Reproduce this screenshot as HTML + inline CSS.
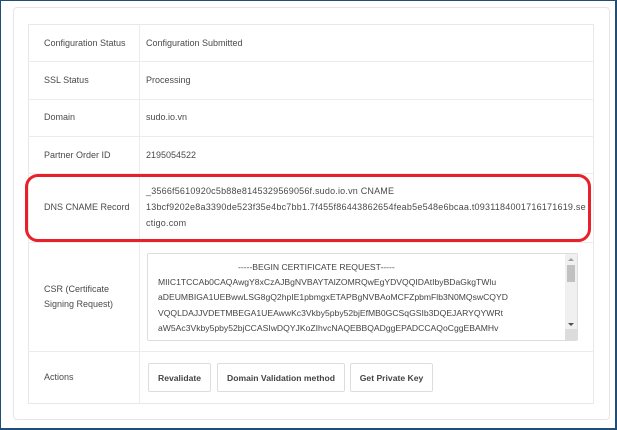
<!DOCTYPE html>
<html><head><style>
*{margin:0;padding:0;box-sizing:border-box}
body{width:617px;height:430px;background:#fff;position:relative;overflow:hidden;font-family:"Liberation Sans",sans-serif;color:#333;font-size:9px}
.frame{position:absolute;left:0;top:0;width:617px;height:430px;border:1px solid #1f4e79;border-bottom-width:2px;border-right-width:2px}
.card{position:absolute;left:13px;top:7px;width:597px;height:413px;border:1px solid #e6e6e6;border-radius:4px;background:#fff}
.tbl{position:absolute;left:28px;top:24px;width:566px;height:380px;border:1px solid #e8e8e8}
.h{position:absolute;left:28px;width:566px;height:1px;background:#ececec}
.v{position:absolute;left:139px;top:24px;width:1px;height:380px;background:#ececec}
.t{position:absolute;white-space:nowrap;color:#4a4a4a}
.ta{position:absolute;left:147px;top:253px;width:431px;height:88px;border:1px solid #ddd;border-radius:2px;overflow:hidden;background:#fff}
.ta .line{position:absolute;white-space:nowrap;font-size:8.6px;color:#444}
.sb{position:absolute;right:0;top:0;width:12px;height:100%;background:#f0f0f0}
.btn{position:absolute;top:363px;height:29px;border:1px solid #ddd;border-radius:2px;background:#fff;font-weight:bold;font-size:8.6px;color:#444;display:flex;align-items:center;justify-content:center}
.red{position:absolute;left:25px;top:174px;width:566px;height:68px;border:3px solid #e8202a;border-radius:13px}
</style></head><body>
<div class="frame"></div>
<div class="card"></div>
<div class="tbl"></div>
<div class="h" style="top:61px"></div>
<div class="h" style="top:99px"></div>
<div class="h" style="top:136px"></div>
<div class="h" style="top:173px"></div>
<div class="h" style="top:242px"></div>
<div class="h" style="top:351px"></div>
<div class="v"></div>

<div class="t" style="left:44px;top:38px">Configuration Status</div>
<div class="t" style="left:146px;top:38px">Configuration Submitted</div>
<div class="t" style="left:44px;top:75px">SSL Status</div>
<div class="t" style="left:146px;top:75px">Processing</div>
<div class="t" style="left:44px;top:112px">Domain</div>
<div class="t" style="left:146px;top:112px">sudo.io.vn</div>
<div class="t" style="left:44px;top:150px">Partner Order ID</div>
<div class="t" style="left:146px;top:150px">2195054522</div>
<div class="t" style="left:44px;top:202px">DNS CNAME Record</div>
<div class="t" style="left:146px;top:186px;letter-spacing:0.2px">_3566f5610920c5b88e8145329569056f.sudo.io.vn CNAME</div>
<div class="t" style="left:146px;top:202px;letter-spacing:0.22px">13bcf9202e8a3390de523f35e4bc7bb1.7f455f86443862654feab5e548e6bcaa.t0931184001716171619.se</div>
<div class="t" style="left:146px;top:218px;letter-spacing:0.2px">ctigo.com</div>
<div class="red"></div>

<div class="t" style="left:44px;top:284px">CSR (Certificate</div>
<div class="t" style="left:44px;top:299px">Signing Request)</div>
<div class="ta">
<div class="line" style="left:90px;top:8px">-----BEGIN CERTIFICATE REQUEST-----</div>
<div class="line" style="left:10px;top:23px">MIIC1TCCAb0CAQAwgY8xCzAJBgNVBAYTAlZOMRQwEgYDVQQIDAtIbyBDaGkgTWlu</div>
<div class="line" style="left:10px;top:38px">aDEUMBIGA1UEBwwLSG8gQ2hpIE1pbmgxETAPBgNVBAoMCFZpbmFlb3N0MQswCQYD</div>
<div class="line" style="left:10px;top:54px">VQQLDAJJVDETMBEGA1UEAwwKc3Vkby5pby52bjEfMB0GCSqGSIb3DQEJARYQYWRt</div>
<div class="line" style="left:10px;top:69px">aW5Ac3Vkby5pby52bjCCASIwDQYJKoZIhvcNAQEBBQADggEPADCCAQoCggEBAMHv</div>
<div class="line" style="left:10px;top:84px">aW5Ac3Vkby5pby52bjCCASIwDQYJKoZIhvcNAQEBBQADggEPADCCAQoCggEBAMHv</div>
<div class="sb"><div style="position:absolute;left:2px;top:11px;width:8px;height:17px;background:#c1c1c1"></div>
<div style="position:absolute;left:3px;top:4px;width:0;height:0;border-left:3px solid transparent;border-right:3px solid transparent;border-bottom:3px solid #a0a0a0"></div>
<div style="position:absolute;left:3px;top:69px;width:0;height:0;border-left:3px solid transparent;border-right:3px solid transparent;border-top:3px solid #505050"></div>
<div style="position:absolute;left:0;bottom:0;width:12px;height:11px;background:#dcdcdc"></div></div>
</div>

<div class="t" style="left:44px;top:372px">Actions</div>
<div class="btn" style="left:148px;width:63px">Revalidate</div>
<div class="btn" style="left:217px;width:128px">Domain Validation method</div>
<div class="btn" style="left:350px;width:83px">Get Private Key</div>
</body></html>
